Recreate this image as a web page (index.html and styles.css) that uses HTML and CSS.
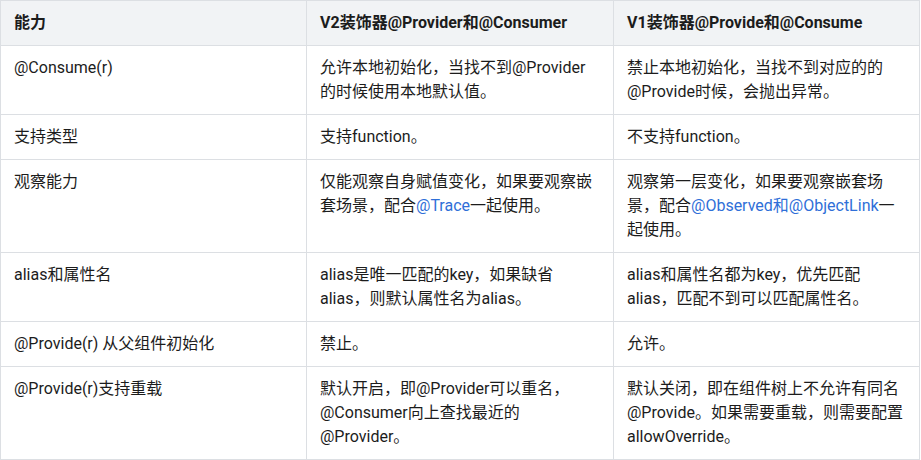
FILE: index.html
```html
<!DOCTYPE html>
<html lang="zh">
<head>
<meta charset="utf-8">
<link rel="stylesheet" href="styles.css">
</head>
<body>
<table class="cmp">
  <colgroup>
    <col class="c1"><col class="c2"><col class="c3">
  </colgroup>
  <thead>
    <tr>
      <th>能力</th>
      <th>V2装饰器@Provider和@Consumer</th>
      <th>V1装饰器@Provide和@Consume</th>
    </tr>
  </thead>
  <tbody>
    <tr>
      <td>@Consume(r)</td>
      <td>允许本地初始化，当找不到@Provider的时候使用本地默认值。</td>
      <td>禁止本地初始化，当找不到对应的的@Provide时候，会抛出异常。</td>
    </tr>
    <tr>
      <td>支持类型</td>
      <td>支持function。</td>
      <td>不支持function。</td>
    </tr>
    <tr>
      <td>观察能力</td>
      <td>仅能观察自身赋值变化，如果要观察嵌套场景，配合<a class="lnk">@Trace</a>一起使用。</td>
      <td>观察第一层变化，如果要观察嵌套场景，配合<a class="lnk">@Observed和@ObjectLink</a>一起使用。</td>
    </tr>
    <tr>
      <td>alias和属性名</td>
      <td>alias是唯一匹配的key，如果缺省alias，则默认属性名为alias。</td>
      <td>alias和属性名都为key，优先匹配alias，匹配不到可以匹配属性名。</td>
    </tr>
    <tr>
      <td>@Provide(r) 从父组件初始化</td>
      <td>禁止。</td>
      <td>允许。</td>
    </tr>
    <tr>
      <td>@Provide(r)支持重载</td>
      <td>默认开启，即@Provider可以重名，@Consumer向上查找最近的@Provider。</td>
      <td>默认关闭，即在组件树上不允许有同名@Provide。如果需要重载，则需要配置allowOverride。</td>
    </tr>
  </tbody>
</table>
</body>
</html>
```
FILE: styles.css
```css
html, body {
  margin: 0;
  padding: 0;
  background: #ffffff;
}
body {
  font-family: "Roboto", "Noto Sans CJK SC", sans-serif;
  font-size: 16px;
  line-height: 24px;
  color: #1c1c1c;
}
.cmp {
  border-collapse: collapse;
  table-layout: fixed;
  width: 919px;
}
.c1 { width: 306px; }
.c2 { width: 307px; }
.c3 { width: 306px; }
.cmp th, .cmp td {
  border: 1px solid #dcdfe3;
  padding: 10px 13px 10px 13px;
  text-align: left;
  vertical-align: top;
}
.cmp th {
  background: #f1f3f5;
  font-weight: 700;
}
.lnk {
  color: #2f6fd8;
  text-decoration: none;
}
```
